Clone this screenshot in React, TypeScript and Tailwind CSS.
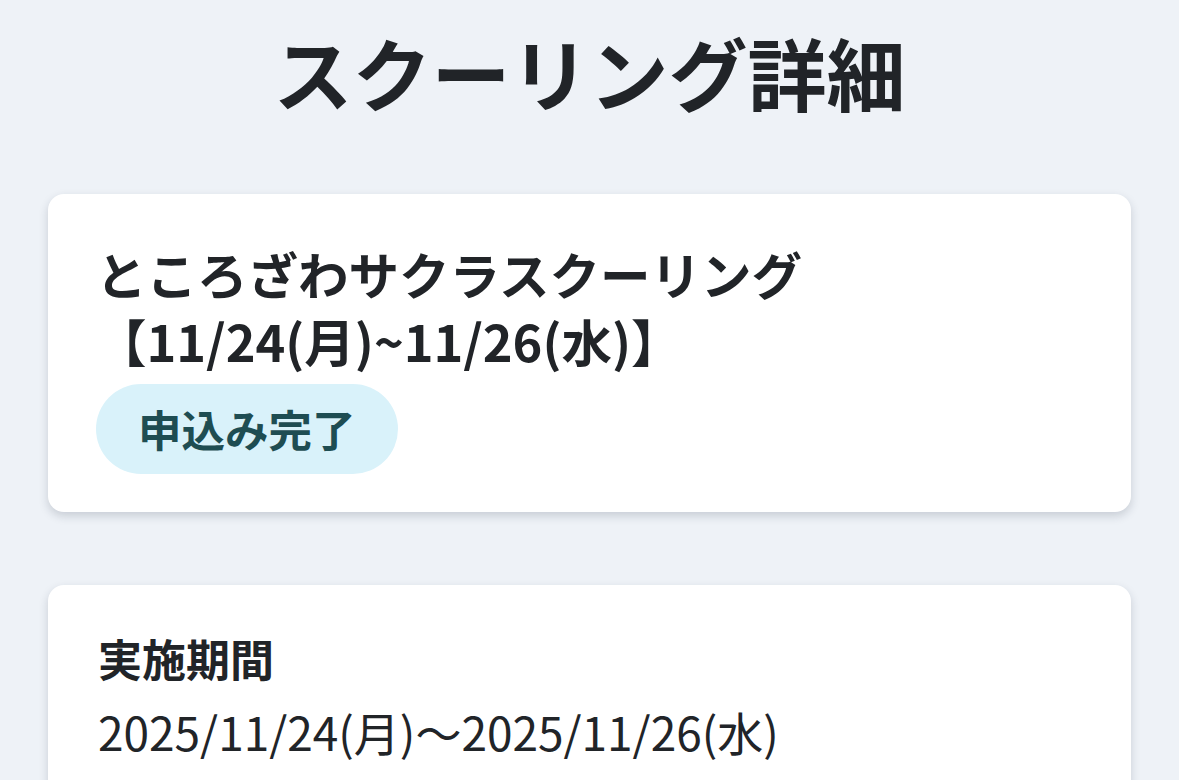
export default function App() {
  return (
    <div className="min-h-screen bg-[#eef2f7] px-[48px] pb-[40px] font-['Noto_Sans_CJK_JP',sans-serif] text-[#212428]">
      <h1 className="pt-[17px] text-center text-[79px] font-bold leading-[109px]">
        スクーリング詳細
      </h1>
      <section className="mt-[68px] rounded-[16px] bg-white px-[48px] pt-[46px] pb-[38px] shadow-[0_4px_10px_rgba(30,40,60,0.18)]">
        <h2 className="text-[50.5px] font-bold leading-[67px]">
          <span className="block">ところざわサクラスクーリング</span>
          <span className="block">【11/24(月)~11/26(水)】</span>
        </h2>
        <div className="mt-[10px] inline-flex h-[90px] items-center rounded-full bg-[#d9f2fa] px-[42px] text-[43.5px] font-bold text-[#1e4d52]">
          申込み完了
        </div>
      </section>
      <section className="mt-[73px] rounded-[16px] bg-white px-[50px] pt-[40px] pb-[40px] shadow-[0_4px_10px_rgba(30,40,60,0.18)]">
        <h3 className="text-[44px] font-bold leading-[66px]">実施期間</h3>
        <p className="mt-[10px] text-[46px] font-normal leading-[60px]">
          2025/11/24(月)〜2025/11/26(水)
        </p>
      </section>
    </div>
  );
}
